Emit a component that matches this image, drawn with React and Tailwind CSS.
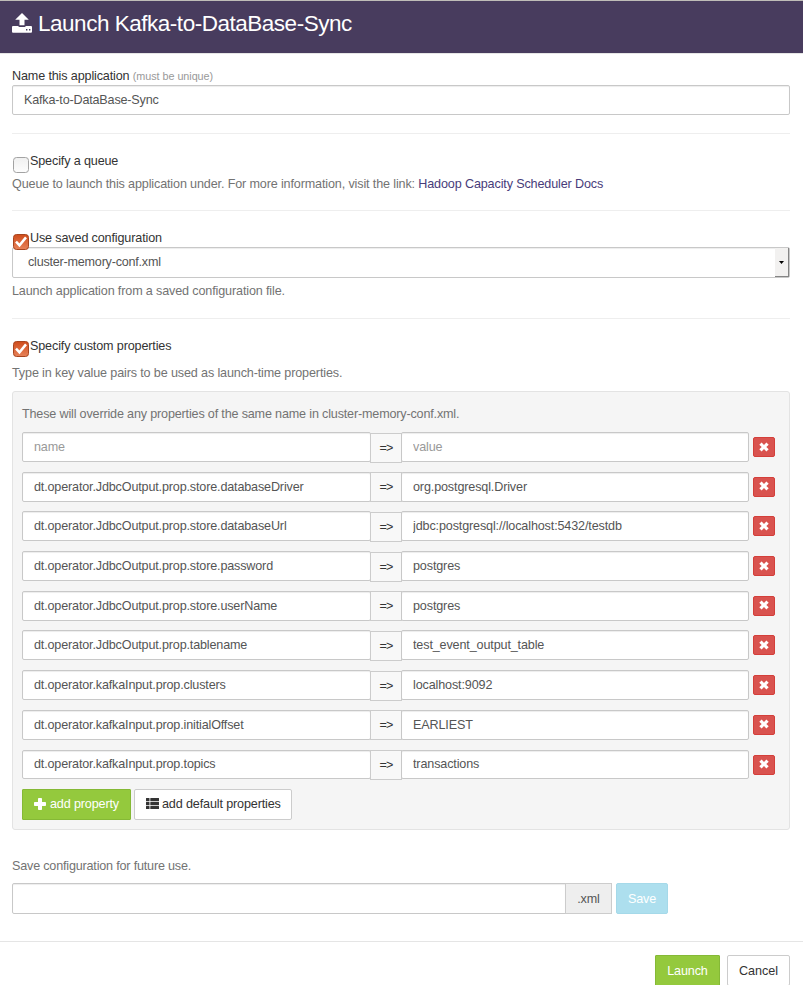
import React from "react";

const properties = [
  ["", ""],
  ["dt.operator.JdbcOutput.prop.store.databaseDriver", "org.postgresql.Driver"],
  ["dt.operator.JdbcOutput.prop.store.databaseUrl", "jdbc:postgresql://localhost:5432/testdb"],
  ["dt.operator.JdbcOutput.prop.store.password", "postgres"],
  ["dt.operator.JdbcOutput.prop.store.userName", "postgres"],
  ["dt.operator.JdbcOutput.prop.tablename", "test_event_output_table"],
  ["dt.operator.kafkaInput.prop.clusters", "localhost:9092"],
  ["dt.operator.kafkaInput.prop.initialOffset", "EARLIEST"],
  ["dt.operator.kafkaInput.prop.topics", "transactions"],
];

const field =
  "min-w-0 rounded-[2px] border border-[#c8c8c8] bg-white px-[11px] text-[#555] outline-none placeholder:text-[#999] shadow-[inset_0_1px_1px_rgba(0,0,0,0.075)]";

function UploadIcon() {
  return (
    <svg width="20" height="20" viewBox="0 0 20 20" fill="#fff" className="shrink-0">
      <path d="M10 0 16.8 6.8H12.5V12.2H7.5V6.8H3.2Z" />
      <path
        fillRule="evenodd"
        d="M1 13H6.3V13.2Q6.6 14 7.6 14H12.4Q13.4 14 13.7 13.2V13H19Q20 13 20 14V18.8Q20 19.8 19 19.8H1Q0 19.8 0 18.8V14Q0 13 1 13ZM14 16V17.4H15.4V16ZM17 16V17.4H18.4V16Z"
      />
    </svg>
  );
}

function RemoveIcon() {
  return (
    <svg width="10" height="10" viewBox="0 0 10 10" fill="#fff" className="-mt-px">
      <path d="M2.6.5 5 2.9 7.4.5 9.7 2.7 7.3 5 9.7 7.3 7.4 9.5 5 7.1 2.6 9.5.3 7.3 2.7 5 .3 2.7Z" />
    </svg>
  );
}

function PlusIcon() {
  return (
    <svg width="12" height="12" viewBox="0 0 12 12" fill="#fff" className="mr-[4px] shrink-0">
      <path d="M4.8 0H7.2Q8 0 8 .8V4H11.2Q12 4 12 4.8V7.2Q12 8 11.2 8H8V11.2Q8 12 7.2 12H4.8Q4 12 4 11.2V8H.8Q0 8 0 7.2V4.8Q0 4 .8 4H4V.8Q4 0 4.8 0Z" />
    </svg>
  );
}

function ListIcon() {
  return (
    <svg width="13" height="11" viewBox="0 0 13 11" fill="#333" className="mr-[3px] -mt-px shrink-0">
      {[0, 4, 8].map((y) => (
        <g key={y}>
          <rect x="0" y={y} width="3.5" height="3.2" rx=".3" />
          <rect x="4.3" y={y} width="8.7" height="3.2" rx=".3" />
        </g>
      ))}
    </svg>
  );
}

function Checkbox({ checked }) {
  return (
    <svg width="16" height="16" viewBox="0 0 16 16" className="relative z-10 ml-px shrink-0">
      <defs>
        <linearGradient id="checkOn" x1="0" y1="0" x2="0" y2="1">
          <stop offset="0" stopColor="#cf4c1b" />
          <stop offset="1" stopColor="#e78259" />
        </linearGradient>
        <linearGradient id="checkOff" x1="0" y1="0" x2="0" y2="1">
          <stop offset="0" stopColor="#f0f0f0" />
          <stop offset="1" stopColor="#fdfdfd" />
        </linearGradient>
      </defs>
      <rect
        x=".5" y=".5" width="15" height="15" rx="3"
        fill={checked ? "url(#checkOn)" : "url(#checkOff)"}
        stroke={checked ? "#a8451f" : "#a3a3a3"}
      />
      {checked && <path d="M3 7.6 6.5 11.4 13 3.4" fill="none" stroke="#fff" strokeWidth="2.5" />}
    </svg>
  );
}

function Option({ checked, label, offset }) {
  return (
    <label className="flex h-[20px] items-start text-[#333]">
      <span className={offset}><Checkbox checked={checked} /></span>
      <span className="ml-[1px] leading-[20px]">{label}</span>
    </label>
  );
}

function PropertyRow({ name, value }) {
  return (
    <div className="flex h-[29.7px] items-start">
      <input className={field + " h-[29.9px] w-[349px] tracking-[-0.16px]"} placeholder="name" defaultValue={name} />
      <span className="mt-[0.5px] -ml-px flex h-[30px] w-[32px] items-center justify-center border border-[#ccc] bg-[#f8f8f8] tracking-[-0.8px] text-[#333]">
        =&gt;
      </span>
      <input className={field + " -ml-px h-[29.9px] w-[348px]"} placeholder="value" defaultValue={value} />
      <button className="mt-[5px] ml-[4px] flex h-[20px] w-[22px] items-center justify-center rounded-[2px] border border-[#d43f3a] bg-[#d9534f]">
        <RemoveIcon />
      </button>
    </div>
  );
}

export default function App() {
  return (
    <div className="h-[985px] w-[803px] overflow-hidden bg-white font-['Liberation_Sans',Arial,sans-serif] text-[12.6px] leading-[18px] tracking-[-0.14px] text-[#737373]">
      <header className="flex h-[54px] items-start border-t border-b border-t-[#bfbdb8] border-b-[#e5e5e5] bg-[#483c5e] pt-[12px] pl-[12px] text-white">
        <UploadIcon />
        <h1 className="ml-[6px] -mt-[2px] text-[22.5px] leading-[26px] tracking-[-0.48px]">Launch Kafka-to-DataBase-Sync</h1>
      </header>

      <main className="flex w-[790px] flex-col pl-[12px]">
        <label className="mt-[13px] h-[18px] text-[#333]">
          Name this application <span className="text-[10.8px] tracking-[-0.05px] text-[#999]">(must be unique)</span>
        </label>
        <input className={field + " h-[30px] pb-px tracking-[-0.18px]"} defaultValue="Kafka-to-DataBase-Sync" />
        <hr className="mt-[18px] border-[#eee]" />

        <section className="mt-[17px]">
          <Option label="Specify a queue" offset="mt-[6px]" />
          <p className="mt-[4px]">
            Queue to launch this application under. For more information, visit the link:{" "}
            <a className="text-[#483c7a]">Hadoop Capacity Scheduler Docs</a>
          </p>
        </section>
        <hr className="mt-[17px] border-[#eee]" />

        <section className="mt-[17px]">
          <Option checked label="Use saved configuration" offset="mt-[6px]" />
          <div className="-mt-px flex h-[31px] rounded-[2px] border border-[#c8c8c8] bg-white pl-[15px] text-[#555] shadow-[inset_0_1px_1px_rgba(0,0,0,0.075)]">
            <span className="flex-1 leading-[28px] tracking-[-0.22px]">cluster-memory-conf.xml</span>
            <span className="flex w-[14px] items-center justify-center border-r border-b border-[#858585] bg-[#f2f1f0]">
              <svg width="5" height="3" viewBox="0 0 5 3"><path d="M0 0H5L2.5 3Z" fill="#000" /></svg>
            </span>
          </div>
          <p className="mt-[4px]">Launch application from a saved configuration file.</p>
        </section>
        <hr className="mt-[18px] border-[#eee]" />

        <section className="mt-[17px]">
          <Option checked label="Specify custom properties" offset="mt-[5px]" />
          <p className="mt-[8px]">Type in key value pairs to be used as launch-time properties.</p>
          <div className="mt-[9px] h-[439px] rounded-[3px] border border-[#e3e3e3] bg-[#f5f5f5] px-[9px] pt-[13px]">
            <p className="h-[27px] tracking-[-0.17px]">These will override any properties of the same name in cluster-memory-conf.xml.</p>
            <div className="flex flex-col gap-[10px]">
              {properties.map(([name, value], i) => (
                <PropertyRow key={i} name={name} value={value} />
              ))}
            </div>
            <div className="mt-[10px] flex gap-[3px]">
              <button className="flex h-[31px] w-[109px] items-center rounded-[1px] border border-[#85b936] bg-[#94c93d] pb-px pl-[11px] text-white">
                <PlusIcon />add property
              </button>
              <button className="flex h-[31px] w-[158px] items-center rounded-[2px] border border-[#ccc] bg-white pb-px pl-[11px] text-[#333]">
                <ListIcon />add default properties
              </button>
            </div>
          </div>
        </section>

        <section className="mt-[27px]">
          <p className="tracking-[-0.19px]">Save configuration for future use.</p>
          <div className="mt-[8px] flex h-[31px]">
            <input className={field + " w-[554px] rounded-r-none"} />
            <span className="-ml-px flex w-[47px] items-center justify-center border border-[#ccc] bg-[#eee] text-[#555]">.xml</span>
            <button className="ml-[4px] w-[52px] rounded-[2px] border border-[#a5d9e9] bg-[#addfee] text-white">Save</button>
          </div>
        </section>
      </main>

      <footer className="mt-[27px] flex justify-end gap-[7px] border-t border-[#e5e5e5] pt-[13px] pr-[13px]">
        <button className="h-[31px] w-[65px] rounded-[1px] border border-[#85b936] bg-[#94c93d] text-white">Launch</button>
        <button className="h-[31px] w-[63px] rounded-[2px] border border-[#ccc] bg-white tracking-[-0.05px] text-[#333]">Cancel</button>
      </footer>
    </div>
  );
}
